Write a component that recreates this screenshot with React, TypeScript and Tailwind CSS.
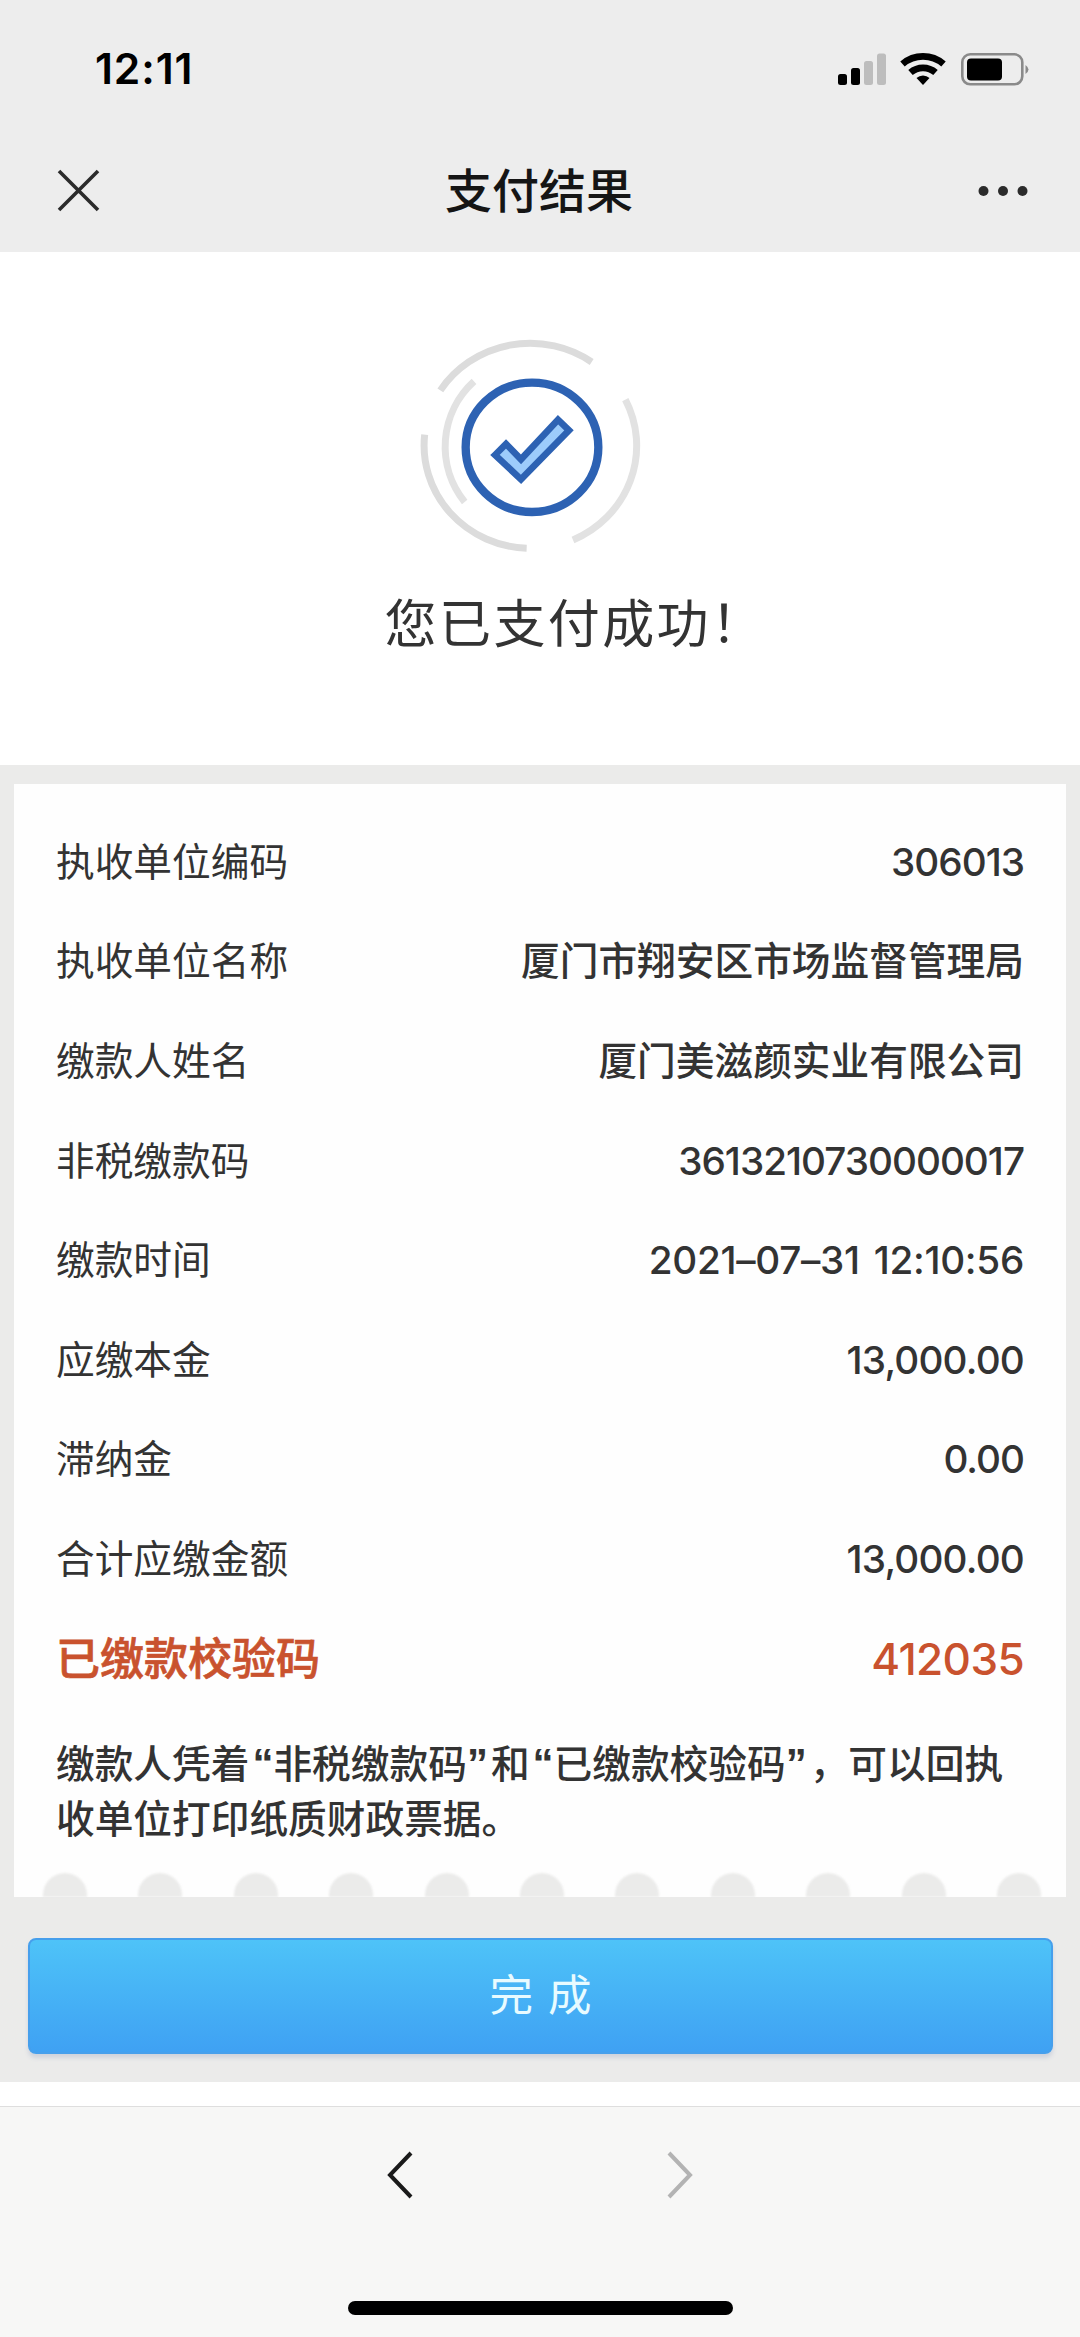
type Row = { label: string; value: string; spacing?: string };

const rows: Row[] = [
  { label: "执收单位编码", value: "306013", spacing: "tracking-[-1px]" },
  { label: "执收单位名称", value: "厦门市翔安区市场监督管理局" },
  { label: "缴款人姓名", value: "厦门美滋颜实业有限公司" },
  { label: "非税缴款码", value: "3613210730000017", spacing: "tracking-[-1px]" },
  { label: "缴款时间", value: "2021–07–31 12:10:56", spacing: "tracking-[-0.3px] [word-spacing:4px]" },
  { label: "应缴本金", value: "13,000.00", spacing: "tracking-[-0.8px]" },
  { label: "滞纳金", value: "0.00", spacing: "tracking-[-1px]" },
  { label: "合计应缴金额", value: "13,000.00", spacing: "tracking-[-0.8px]" },
];

const StatusBar = () => (
  <div className="flex h-[137px] items-center justify-between pl-[95px] pr-[49px]">
    <span className="pt-0.5 text-[42.5px] font-semibold leading-none tracking-[0.9px] text-black">12:11</span>
    <svg width="194" height="36" viewBox="0 0 194 36">
      <rect x="1" y="23" width="9" height="11" rx="2.5" />
      <rect x="14" y="17" width="9" height="17" rx="2.5" />
      <rect x="27" y="10" width="9" height="24" rx="2.5" fill="#bdbdbd" />
      <rect x="40" y="2.5" width="9" height="31.5" rx="2.5" fill="#bdbdbd" />
      <g fill="none" stroke="#000" strokeWidth="6.8">
        <path d="M65.500 13a31.500 31.500 0 0 1 41 0" />
        <path d="M73.500 21.500a19 19 0 0 1 25 0" />
      </g>
      <path d="M79.500 27a9.500 9.500 0 0 1 13 0l-6.500 7z" />
      <rect x="125.3" y="3.3" width="60" height="30" rx="8" fill="none" stroke="#8a8a8a" strokeWidth="2.6" />
      <rect x="130" y="7.5" width="35" height="22" rx="4" />
      <path d="M188.500 14q6 4.500 0 9z" fill="#8a8a8a" />
    </svg>
  </div>
);

const NavBar = () => (
  <div className="flex h-[115px] items-start justify-between pl-[57px] pr-[51px] pt-8">
    <svg width="44" height="44" viewBox="0 0 44 44" stroke="#2b2b2b" strokeWidth="3.6">
      <path d="M2 2l39 39M41 2L2 41" />
    </svg>
    <h1 className="text-[47px] font-medium leading-[44px] text-[#151515]">支付结果</h1>
    <svg width="52" height="44" viewBox="0 0 52 44" fill="#2b2b2b">
      <circle cx="6.5" cy="22" r="5" />
      <circle cx="26" cy="22" r="5" />
      <circle cx="45.5" cy="22" r="5" />
    </svg>
  </div>
);

const SuccessMark = () => (
  <svg width="226" height="220" viewBox="170 110 678 660" fill="none">
    <g stroke="#dcdcdc" strokeWidth="21">
      <path d="M240 270A321 309 0 0 1 694 185" />
      <path d="M795 298A321 309 0 0 1 638 719" stroke="#e2e2e2" />
      <path d="M193 403A321 309 0 0 0 499 744" />
      <path d="M341 243A265 265 0 0 0 313 605" stroke="#e2e2e2" />
    </g>
    <ellipse cx="515" cy="441" rx="199" ry="194" stroke="#2d62b3" strokeWidth="25" />
    <path
      d="M404 464L437 431L482 477L593 358L626 390L482 537Z"
      fill="#9dccfb"
      stroke="#2d62b3"
      strokeWidth="20"
    />
  </svg>
);

const Quoted = ({ text }: { text: string }) => (
  <>
    <span className="pl-[3px] font-['Liberation_Sans',sans-serif] text-[42px] font-bold leading-none">“</span>
    {text}
    <span className="pr-[3px] font-['Liberation_Sans',sans-serif] text-[42px] font-bold leading-none">”</span>
  </>
);

const App = () => {
  return (
    <div className="flex min-h-[2337px] w-[1080px] flex-col bg-white font-['Inter','Noto_Sans_CJK_SC',sans-serif] text-[#333]">
      <header className="h-[252px] bg-[#ededed]">
        <StatusBar />
        <NavBar />
      </header>

      <section className="flex h-[513px] flex-col items-center bg-white pt-[85px]">
        <div className="mr-5">
          <SuccessMark />
        </div>
        <p className="ml-[70px] mt-[33px] text-[52px] leading-[70px] tracking-[2.4px]">您已支付成功！</p>
      </section>

      <main className="h-[1317px] bg-[#ebebea] px-[14px] pt-[19px]">
        <div className="flex h-[1113px] flex-col bg-[#fefefe] px-[42px] pt-7">
          {rows.map((row) => (
            <div key={row.label} className="flex h-[99.6px] items-center justify-between text-[38.7px]">
              <span>{row.label}</span>
              <span className={`font-medium ${row.spacing ?? ""}`}>{row.value}</span>
            </div>
          ))}
          <div className="flex h-[100px] items-center justify-between text-[44px] font-medium text-[#c9522e]">
            <span className="[-webkit-text-stroke:0.7px]">已缴款校验码</span>
            <span className="tracking-[-0.6px]">412035</span>
          </div>
          <p className="mt-[28px] whitespace-nowrap text-[38.7px] font-medium leading-[55.7px]">
            缴款人凭着
            <Quoted text="非税缴款码" />和<Quoted text="已缴款校验码" />，可以回执
            <br />
            收单位打印纸质财政票据。
          </p>
          {/* torn edge of the receipt */}
          <div className="-ml-[13px] -mr-[17px] mt-auto flex justify-between">
            {Array.from({ length: 11 }, (_, i) => (
              <span key={i} className="h-6 w-11 rounded-t-full bg-[#ebebea] blur-[1px]" />
            ))}
          </div>
        </div>
        <button
          type="button"
          className="ml-[14px] mt-[41px] block h-[116px] w-[1025px] rounded-lg border-2 border-[#469fec] bg-linear-to-b from-[#4ec3f8] to-[#3fa1f3] text-[43.5px] text-[#e8fbff] shadow-[0_4px_4px_#cfd3dd] [word-spacing:3px]"
        >
          完 成
        </button>
      </main>

      <footer className="mt-6 flex flex-1 flex-col items-center border-t border-[#dedede] bg-[#f7f7f6] pt-[43px]">
        <div className="flex gap-[252px]">
          <svg width="28" height="50" viewBox="0 0 28 50" fill="none" stroke="#1a1a1a" strokeWidth="4">
            <path d="M25 3L4 25l21 22" />
          </svg>
          <svg width="28" height="50" viewBox="0 0 28 50" fill="none" stroke="#b3b3b3" strokeWidth="4">
            <path d="M3 3l21 22L3 47" />
          </svg>
        </div>
        <div className="mb-[22px] mt-auto h-[14px] w-[385px] rounded-full bg-black" />
      </footer>
    </div>
  );
};

export default App;
